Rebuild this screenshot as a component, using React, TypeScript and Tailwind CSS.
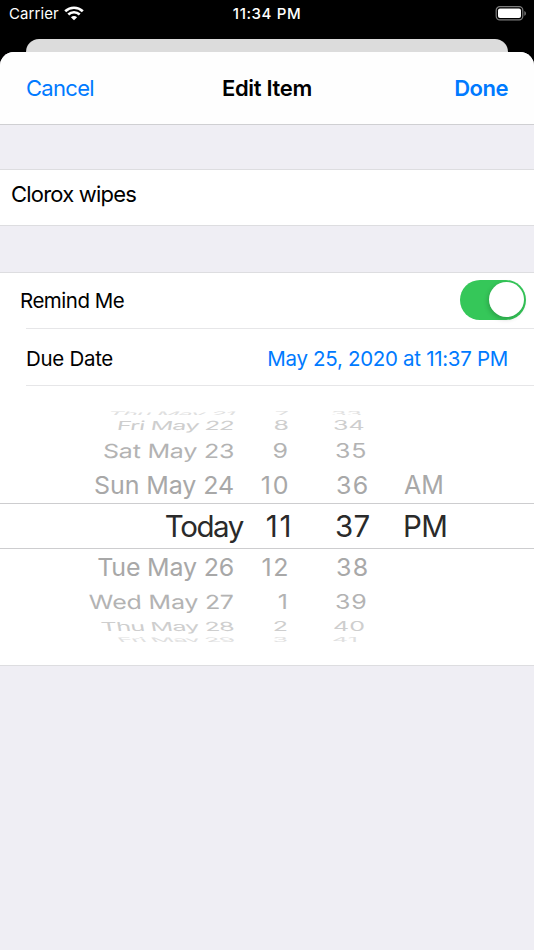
import { clsx } from 'clsx';

type Row = {
  date: string;
  hour: string;
  minute: string;
  period?: string;
  row: string;
  dateText: string;
  numText: string;
  minuteText: string;
};

// The rows flatten and fade toward both ends of the wheel
const ROWS: Row[] = [
  { date: 'Thu May 21', hour: '7',  minute: '33', row: 'h-[5px] text-[#e0e0e0]', dateText: '-skew-x-[12deg] translate-y-px scale-y-[0.25] tracking-[-0.9px]', numText: 'translate-y-px scale-y-[0.25]', minuteText: '-translate-x-[5px] translate-y-px scale-y-[0.25]' },
  { date: 'Fri May 22', hour: '8',  minute: '34', row: 'h-[19px] text-[#cecece]', dateText: '-skew-x-[5deg] translate-y-px scale-y-50 tracking-[-0.8px]', numText: 'translate-y-px scale-y-50', minuteText: '-translate-x-[3px] translate-y-px scale-y-50' },
  { date: 'Sat May 23', hour: '9',  minute: '35', row: 'h-[31px] text-[#b3b3b3]', dateText: '-skew-x-[2deg] translate-y-[1.5px] scale-y-[0.78] tracking-[-0.2px]', numText: '-translate-x-px translate-y-[1.5px] scale-y-[0.78]', minuteText: '-translate-x-px translate-y-[1.5px] scale-y-[0.78] tracking-[0.8px]' },
  { date: 'Sun May 24', hour: '10', minute: '36', period: 'AM', row: 'h-[38px] text-[#a8a8a8]', dateText: 'translate-y-[2px] scale-y-[0.98] tracking-[-0.1px]', numText: 'translate-x-px translate-y-[2px] scale-y-[0.98] tracking-[1.6px]', minuteText: 'translate-y-[2px] scale-y-[0.98] tracking-[1.2px]' },
  { date: 'Today',      hour: '11', minute: '37', period: 'PM', row: 'h-[46px] border-y border-[#cdcdcf] text-[#2a2a2a] text-[29.5px]', dateText: 'translate-x-[9px] translate-y-px tracking-[-1.4px]', numText: 'translate-x-[4px] translate-y-px tracking-[1.6px]', minuteText: '-translate-x-px translate-y-px tracking-[0.3px]' },
  { date: 'Tue May 26', hour: '12', minute: '38', row: 'h-[38px] text-[#a8a8a8]', dateText: 'scale-y-[0.98] tracking-[-0.2px]', numText: 'translate-x-px scale-y-[0.98] tracking-[1.6px]', minuteText: 'scale-y-[0.98] tracking-[1.2px]' },
  { date: 'Wed May 27', hour: '1',  minute: '39', row: 'h-[31px] text-[#b3b3b3]', dateText: 'skew-x-[2deg] scale-y-[0.78] tracking-[-0.2px]', numText: '-translate-x-px scale-y-[0.78]', minuteText: '-translate-x-px scale-y-[0.78] tracking-[0.8px]' },
  { date: 'Thu May 28', hour: '2',  minute: '40', row: 'h-[19px] text-[#cecece]', dateText: 'skew-x-[5deg] -translate-y-px scale-y-50 tracking-[-0.8px]', numText: '-translate-x-px -translate-y-px scale-y-50', minuteText: '-translate-x-[3px] -translate-y-px scale-y-50' },
  { date: 'Fri May 29', hour: '3',  minute: '41', row: 'h-[5px] text-[#e0e0e0]', dateText: 'skew-x-[12deg] scale-y-[0.25] tracking-[-0.9px]', numText: '-translate-x-px scale-y-[0.25]', minuteText: '-translate-x-[4px] scale-y-[0.25]' },
];

function StatusBar() {
  return (
    <div className="relative h-[39px] text-white">
      <div className="flex h-7 items-center justify-between pl-[9px] pr-[7px]">
        <div className="flex items-center gap-[5px]">
          <span className="pt-px text-[15px] tracking-[0.1px]">Carrier</span>
          <svg width="20" height="15" viewBox="0 0 20 15" fill="none" stroke="white" strokeWidth="2.7" className="-translate-y-px">
            <path d="M1.2 5.2C6.2.6 13.8.6 18.8 5.2" />
            <path d="M4.3 8.5c3.2-3 8.2-3 11.4 0" />
            <path d="M10 14.3 6.9 11.2c1.8-1.6 4.4-1.6 6.2 0z" fill="white" stroke="none" />
          </svg>
        </div>
        <svg width="32" height="16" viewBox="0 0 32 16" fill="none" className="-translate-y-[0.5px]">
          <rect x="1.2" y="1.2" width="26.6" height="13.2" rx="3.6" stroke="#7d7d7d" strokeWidth="1.2" />
          <rect x="3" y="3" width="23" height="9.6" rx="2" fill="white" />
          <path d="M29.4 5.4c2 .8 2 4 0 4.8z" fill="#7d7d7d" />
        </svg>
      </div>
      <span className="absolute inset-x-0 top-0 h-7 text-center text-[15px] font-medium leading-7 tracking-[0.6px]">
        11:34 PM
      </span>
    </div>
  );
}

function Wheel() {
  return (
    <div className="flex h-[279px] flex-col justify-center text-[25px] leading-none">
      <div className="flex flex-col overflow-hidden">
        {ROWS.map((r) => (
          <div key={r.date} className={clsx('flex shrink-0 items-center overflow-hidden whitespace-nowrap', r.row)}>
            <div className="flex w-[234px] justify-end">
              <span className={clsx('origin-right', r.dateText)}>{r.date}</span>
            </div>
            <div className="flex w-[55px] justify-end">
              <span className={r.numText}>{r.hour}</span>
            </div>
            <div className="w-[114px] pl-[47px]">
              <span className={clsx('inline-block origin-left', r.minuteText)}>{r.minute}</span>
            </div>
            <span className={clsx('inline-block', r.period === 'AM' ? 'translate-x-px translate-y-[2px]' : 'translate-y-px tracking-[-0.6px]')}>
              {r.period}
            </span>
          </div>
        ))}
      </div>
    </div>
  );
}

export default function App() {
  return (
    <div className="flex h-[950px] w-[534px] flex-col overflow-hidden bg-black font-['Inter',sans-serif] text-black">
      <StatusBar />

      {/* Edge of the screen behind the sheet */}
      <div className="mx-[26px] h-[13px] shrink-0 rounded-t-[13px] bg-[#dcdcdc]" />

      <div className="flex flex-1 flex-col overflow-hidden rounded-t-[14px] bg-[#efeef4]">
        {/* Header */}
        <header className="grid h-[73px] shrink-0 grid-cols-3 items-center border-b border-[#cfcfd2] bg-[#fefefe] px-[26px] text-[22px]">
          <button className="text-left tracking-[-0.7px] text-[#007aff]">Cancel</button>
          <h1 className="text-center font-semibold tracking-[-0.3px]">Edit Item</h1>
          <button className="text-right font-semibold tracking-[-0.5px] text-[#007aff]">Done</button>
        </header>

        {/* Name */}
        <div className="mt-11 h-[57px] shrink-0 border-y border-[#dddde0] bg-white pl-[11px] pt-2 text-[22px] leading-8 tracking-[-0.8px]">
          Clorox wipes
        </div>

        {/* Reminder */}
        <section className="mt-[46px] shrink-0 border-y border-[#dddde0] bg-white">
          <div className="flex h-[55px] items-center justify-between pl-5 pr-2">
            <span className="pt-0.5 text-[20.5px] tracking-[-0.5px]">Remind Me</span>
            <div role="switch" aria-checked="true" className="-mt-px mb-px flex h-10 w-[66px] items-center justify-end rounded-full bg-[#35c759] pr-[2px]">
              <div className="size-[35px] rounded-full bg-white shadow-[-1px_2px_5px_rgba(0,0,0,0.2)]" />
            </div>
          </div>
          <div className="ml-[26px] flex h-[58px] items-center justify-between border-y border-[#e6e6e8] pr-[26px] pt-1 text-[20.5px] tracking-[-0.3px]">
            <span>Due Date</span>
            <span className="text-[#007aff]">May 25, 2020 at 11:37 PM</span>
          </div>
          <Wheel />
        </section>
      </div>
    </div>
  );
}
